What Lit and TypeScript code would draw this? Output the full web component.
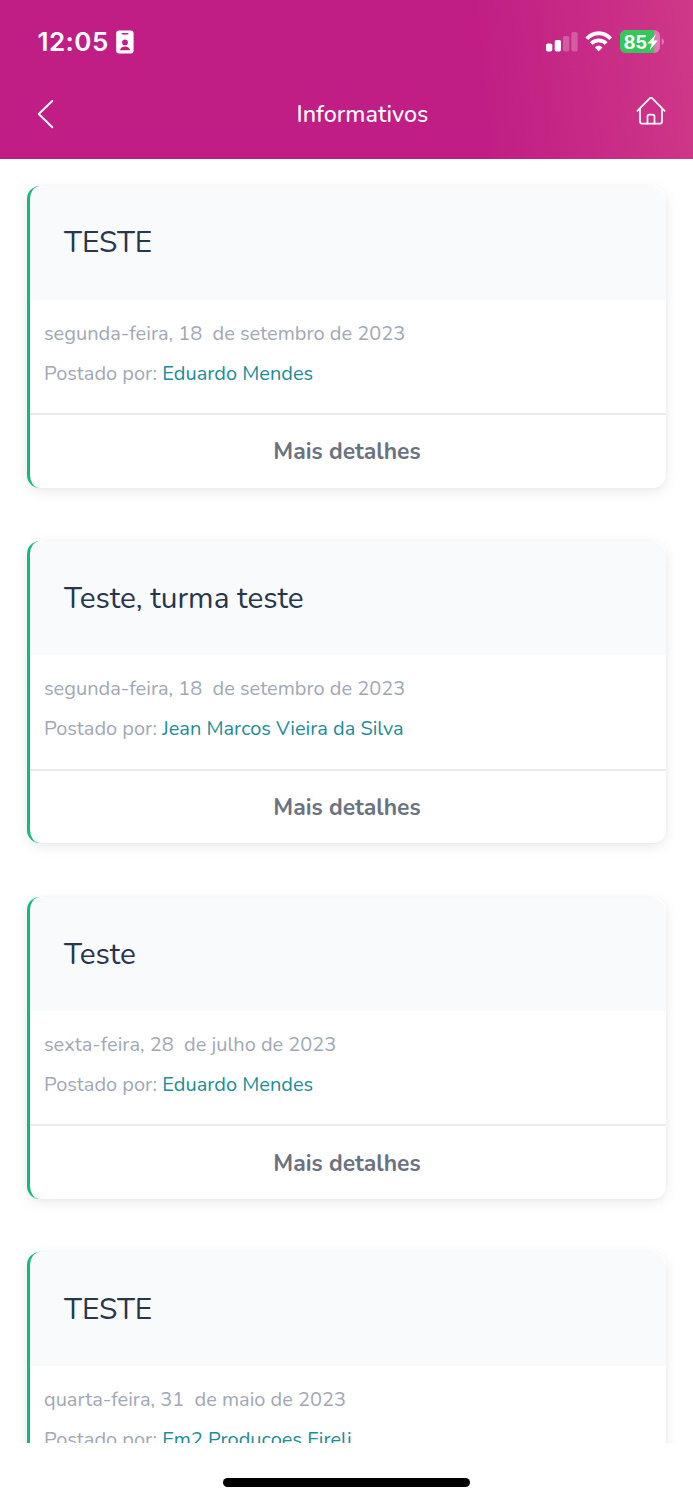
import { LitElement, html, css } from "lit";
import { customElement, property } from "lit/decorators.js";

interface Notice {
  title: string;
  date: string;
  author: string;
}

const notices: Notice[] = [
  { title: "TESTE", date: "segunda-feira, 18\u00a0 de setembro de 2023", author: "Eduardo Mendes" },
  { title: "Teste, turma teste", date: "segunda-feira, 18\u00a0 de setembro de 2023", author: "Jean Marcos Vieira da Silva" },
  { title: "Teste", date: "sexta-feira, 28\u00a0 de julho de 2023", author: "Eduardo Mendes" },
  { title: "TESTE", date: "quarta-feira, 31\u00a0 de maio de 2023", author: "Em2 Producoes Eireli" },
];

@customElement("status-bar")
class StatusBar extends LitElement {
  static styles = css`
    :host { display: flex; align-items: center; height: 84px; padding: 0 29px 0 37.5px; color: #fff; }
    .time { font: 600 26px/32px Inter, sans-serif; letter-spacing: 0.45px; }
    .badge { margin-left: 7.500px; }
    .icons { display: flex; align-items: center; margin-left: auto; }
    .battery-text { font: 700 18.5px Inter, sans-serif; }
    svg { display: block; }
  `;
  render() {
    return html`
      <span class="time">12:05</span>
      <svg class="badge" width="18" height="24" viewBox="0 0 18 24">
        <rect x="0.2" y="0.4" width="17.4" height="23" rx="3" fill="#fff" />
        <rect x="5.5" y="3" width="7" height="1.6" rx="0.8" fill="#c01e84" />
        <circle cx="9" cy="12.4" r="2.9" fill="#c01e84" />
        <path d="M4 20.200c.3-2.400 2.200-3.800 5-3.800s4.700 1.400 5 3.800z" fill="#c01e84" />
      </svg>
      <div class="icons">
        <svg width="118" height="28" viewBox="546 28 118 28">
          <rect x="546" y="43.500" width="6.300" height="8" rx="1.800" fill="#fff" />
          <rect x="554.700" y="40" width="6.300" height="11.500" rx="1.800" fill="#fff" />
          <rect x="563" y="36" width="6.300" height="15.500" rx="1.800" fill="#fff" opacity=".24" />
          <rect x="571.300" y="32" width="6.300" height="19.500" rx="1.800" fill="#fff" opacity=".24" />
          <g fill="none" stroke="#fff" stroke-width="3.900">
            <path d="M586.800 38.700C593.300 31.500 604.100 31.500 610.600 38.700" />
            <path d="M591.200 43.500C595.300 39.300 602.100 39.300 606.200 43.500" />
          </g>
          <path d="M594.900 47.400C597.100 45.300 600.300 45.300 602.500 47.400L598.700 51.400Z" fill="#fff" />
          <rect x="620" y="30" width="40" height="23" rx="6" fill="#e07ab5" />
          <path d="M626 30H654.200V53H626A6 6 0 0 1 620 47V36A6 6 0 0 1 626 30Z" fill="#34c759" />
          <path d="M661.700 38.200C664.700 39.500 664.700 43.500 661.700 44.900Z" fill="#e07ab5" />
          <text class="battery-text" x="623.500" y="48.600" textLength="23.500" fill="#fff">85</text>
          <path d="M655.800 34.200L647.400 43.500H651.700L649.500 50.400L657.900 40.600H653.600Z" fill="#fff" />
        </svg>
      </div>
    `;
  }
}

@customElement("nav-bar")
class NavBar extends LitElement {
  static styles = css`
    :host { display: grid; grid-template-columns: 66px 1fr 40px; align-items: center; height: 60px; padding: 0 25px 0 31px; color: #fff; }
    .title { text-align: center; font: 500 23.400px/32px Nunito, Lato, sans-serif; }
    .home { justify-self: end; }
    svg { display: block; fill: none; stroke: currentColor; stroke-linecap: round; stroke-linejoin: round; }
  `;
  render() {
    return html`
      <svg width="30" height="32" viewBox="31 98 30 32" stroke-width="2">
        <path d="M52.300 101L38.700 114L52.300 127.200" />
      </svg>
      <span class="title">Informativos</span>
      <svg class="home" width="34" height="34" viewBox="634 97 34 34" stroke-width="1.700">
        <path d="M637.400 110.800L649.700 98.400Q651 97.100 652.300 98.400L664.600 110.800" />
        <path d="M640 109V121.500Q640 123.600 642.100 123.600H659.900Q662 123.600 662 121.500V109" />
        <path d="M647.500 123.500V116.500Q647.500 114.700 649.300 114.700H652.700Q654.500 114.700 654.500 116.500V123.500" />
      </svg>
    `;
  }
}

@customElement("notice-card")
class NoticeCard extends LitElement {
  @property({ attribute: false }) notice!: Notice;
  static styles = css`
    :host { display: block; flex: none; }
    .card {
      display: flex; flex-direction: column; box-sizing: border-box; height: 302.200px;
      border-left: 3px solid #10b981; border-radius: 13px; background: #fff;
      box-shadow: 0 4px 14px rgba(0, 0, 0, 0.080), 0 1px 4px rgba(0, 0, 0, 0.030);
      font-family: Nunito, Lato, sans-serif;
    }
    .head {
      display: flex; align-items: center; box-sizing: border-box; height: 114px; padding: 1.600px 33.500px 0;
      margin-left: 0.500px; background: #f9fafc; border-radius: 16px 16px 0 0; color: #27364b;
      font-size: 29.800px; font-weight: 370; line-height: 40px;
    }
    .body {
      flex: 1; padding: 14px 14px 0; color: #a1a8b5; font-size: 19.990px; line-height: 40px;
    }
    .line { white-space: pre; }
    .author { color: #1c8c97; }
    .more {
      display: flex; align-items: center; justify-content: center; box-sizing: border-box; height: 74.800px; padding: 1px 2px 0 0;
      border-top: 2px solid #e8eaee; color: #6b7280; font-size: 22.900px; font-weight: 700;
    }
  `;
  render() {
    const n = this.notice;
    return html`
      <article class="card">
        <div class="head">${n.title}</div>
        <div class="body">
          <div class="line">${n.date}</div>
          <div class="line">Postado por: <span class="author">${n.author}</span></div>
        </div>
        <div class="more">Mais detalhes</div>
      </article>
    `;
  }
}

@customElement("app-root")
class AppRoot extends LitElement {
  static styles = css`
    :host { display: flex; flex-direction: column; height: 1500px; background: #fff; overflow: hidden; }
    .top { flex: none; height: 159px; background: linear-gradient(84deg, #c01e84 0%, #c01e84 69%, #cf3888 100%); }
    .list { display: flex; flex-direction: column; gap: 53.400px; box-sizing: border-box; height: 1284px; padding: 26.700px 27px 0; overflow: hidden; }
    .foot { flex: 1; display: flex; justify-content: center; align-items: flex-start; padding-top: 35px; }
    .indicator { width: 247px; height: 8.500px; border-radius: 5px; background: #000; }
  `;
  render() {
    return html`
      <header class="top"><status-bar></status-bar><nav-bar></nav-bar></header>
      <main class="list">${notices.map((n) => html`<notice-card .notice=${n}></notice-card>`)}</main>
      <div class="foot"><div class="indicator"></div></div>
    `;
  }
}
